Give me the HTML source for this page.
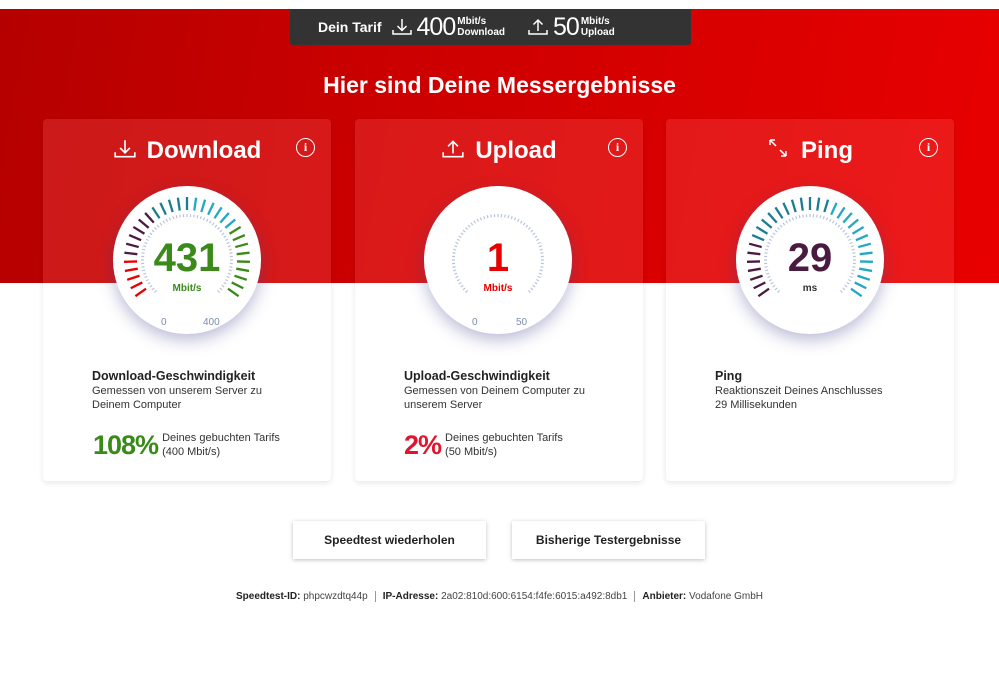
<!DOCTYPE html>
<html><head><meta charset="utf-8"><style>
*{margin:0;padding:0;box-sizing:border-box}
body{width:999px;height:693px;background:#fff;font-family:"Liberation Sans",sans-serif;position:relative;overflow:hidden;color:#333}
.band{position:absolute;left:0;top:9px;width:999px;height:274px;background:linear-gradient(100deg,#b50000 0%,#cc0000 40%,#e80000 100%)}
.tarif{position:absolute;left:290px;top:9px;width:401px;height:36px;background:#333;border-radius:0 0 3px 3px;color:#fff;display:flex;align-items:center}
.tarif b{font-size:14px}
.big{font-size:25px;letter-spacing:-1px}
.sm{font-size:10px;line-height:11px;font-weight:bold}
h1{position:absolute;top:72px;width:999px;text-align:center;color:#fff;font-size:23px;font-weight:bold}
.card{position:absolute;top:119px;width:288px;height:362px;border-radius:4px;box-shadow:0 2px 6px rgba(0,0,0,.10);overflow:hidden}
.card .top{position:absolute;left:0;top:0;width:100%;height:164px;background:rgba(255,90,90,.28)}
.card .bot{position:absolute;left:0;top:164px;width:100%;height:198px;background:#fff}
.title{position:absolute;top:18px;width:100%;text-align:center;color:#fff;font-size:24px;font-weight:bold}
.info{position:absolute;right:16px;top:19px;width:19px;height:19px;border:1.5px solid #fff;border-radius:50%;color:#fff;font:bold 12px "Liberation Serif",serif;text-align:center;line-height:16px}
.g{position:absolute;width:148px;height:148px;border-radius:50%;background:#fff;box-shadow:0 6px 16px rgba(60,60,140,.35);top:186px}
.g svg{position:absolute;left:0;top:0}
.val{position:absolute;width:100%;text-align:center;top:50px;font-size:40px;font-weight:bold}
.unit{position:absolute;width:100%;text-align:center;top:97px;font-size:10px;font-weight:bold}
.sc{position:absolute;top:131px;font-size:10px;color:#7a8cb0}
.txt{position:absolute;top:369px;font-size:11px;line-height:14px;color:#333}
.txt b{font-size:12.5px;color:#222}
.pct{position:absolute;top:431px;display:flex;align-items:center;font-size:11px;line-height:14px}
.pct span{font-size:27px;font-weight:bold;margin-right:4px;letter-spacing:-1px}
.btn{position:absolute;top:521px;width:193px;height:38px;background:#fff;box-shadow:0 1px 4px rgba(0,0,0,.25);font-size:12px;font-weight:bold;text-align:center;line-height:38px;color:#222}
.foot{position:absolute;top:591px;left:0;width:999px;text-align:center;font-size:10px;color:#444}
.foot b{color:#222}
.foot i{font-style:normal;border-left:1px solid #999;margin:0 7px}
</style></head><body>
<div class="band"></div>
<div class="tarif">
<b style="margin-left:28px">Dein Tarif</b>
<svg width="22" height="20" style="margin-left:9px" viewBox="0 0 22 20" fill="none" stroke="#fff" stroke-width="1.5"><path d="M11 2v11M6.5 9l4.5 4.5L15.5 9M2 13v4h18v-4"/></svg>
<span class="big" style="margin-left:4px">400</span><span class="sm" style="margin-left:2px">Mbit/s<br>Download</span>
<svg width="22" height="20" style="margin-left:22px" viewBox="0 0 22 20" fill="none" stroke="#fff" stroke-width="1.5"><path d="M11 14V3M6.5 7.5L11 3l4.5 4.5M2 13v4h18v-4"/></svg>
<span class="big" style="margin-left:4px">50</span><span class="sm" style="margin-left:2px">Mbit/s<br>Upload</span>
</div>
<h1>Hier sind Deine Messergebnisse</h1>

<div class="card" style="left:43px"><div class="top"></div><div class="bot"></div>
<div class="title"><svg width="24" height="22" viewBox="0 0 22 20" fill="none" stroke="#fff" stroke-width="1.5" style="vertical-align:-2px;margin-right:10px"><path d="M11 2v11M6.5 9l4.5 4.5L15.5 9M2 13v4h18v-4"/></svg>Download</div><div class="info">i</div></div>
<div class="card" style="left:355px"><div class="top"></div><div class="bot"></div>
<div class="title"><svg width="24" height="22" viewBox="0 0 22 20" fill="none" stroke="#fff" stroke-width="1.5" style="vertical-align:-2px;margin-right:10px"><path d="M11 14V3M6.5 7.5L11 3l4.5 4.5M2 13v4h18v-4"/></svg>Upload</div><div class="info">i</div></div>
<div class="card" style="left:666px"><div class="top"></div><div class="bot"></div>
<div class="title"><svg width="22" height="22" viewBox="0 0 22 22" fill="none" stroke="#fff" stroke-width="1.5" style="vertical-align:-1px;margin-right:12px"><path d="M3 3l6 6M3 3v5M3 3h5M19 19l-6-6M19 19v-5M19 19h-5"/></svg>Ping</div><div class="info">i</div></div>

<div class="g" style="left:113px" id="g1"><div class="val" style="color:#3a8a1a">431</div><div class="unit" style="color:#3a8a1a">Mbit/s</div><div class="sc" style="left:48px">0</div><div class="sc" style="left:90px">400</div></div>
<div class="g" style="left:424px" id="g2"><div class="val" style="color:#e60000">1</div><div class="unit" style="color:#e60000">Mbit/s</div><div class="sc" style="left:48px">0</div><div class="sc" style="left:92px">50</div></div>
<div class="g" style="left:736px" id="g3"><div class="val" style="color:#4a1b40">29</div><div class="unit" style="color:#333">ms</div></div>

<div class="txt" style="left:92px"><b>Download-Geschwindigkeit</b><br>Gemessen von unserem Server zu<br>Deinem Computer</div>
<div class="txt" style="left:404px"><b>Upload-Geschwindigkeit</b><br>Gemessen von Deinem Computer zu<br>unserem Server</div>
<div class="txt" style="left:715px"><b>Ping</b><br>Reaktionszeit Deines Anschlusses<br>29 Millisekunden</div>
<div class="pct" style="left:93px"><span style="color:#3a8a1a">108%</span><div>Deines gebuchten Tarifs<br>(400 Mbit/s)</div></div>
<div class="pct" style="left:404px"><span style="color:#e2152e">2%</span><div>Deines gebuchten Tarifs<br>(50 Mbit/s)</div></div>

<div class="btn" style="left:293px">Speedtest wiederholen</div>
<div class="btn" style="left:512px">Bisherige Testergebnisse</div>
<div class="foot"><b>Speedtest-ID:</b> phpcwzdtq44p<i></i><b>IP-Adresse:</b> 2a02:810d:600:6154:f4fe:6015:a492:8db1<i></i><b>Anbieter:</b> Vodafone GmbH</div>

<script>
function gauge(id,cols){
 var n=cols.length,s='<svg width="148" height="148" viewBox="0 0 148 148">';
 for(var i=0;i<n;i++){var a=(215-250*i/(n-1))*Math.PI/180,c=Math.cos(a),d=Math.sin(a);
  if(cols[i]) s+='<line x1="'+(74+50*c)+'" y1="'+(74-50*d)+'" x2="'+(74+63*c)+'" y2="'+(74-63*d)+'" stroke="'+cols[i]+'" stroke-width="2.3"/>';}
 for(var i=0;i<=60;i++){var a=(225-270*i/60)*Math.PI/180,c=Math.cos(a),d=Math.sin(a);
  s+='<line x1="'+(74+43*c)+'" y1="'+(74-43*d)+'" x2="'+(74+46*c)+'" y2="'+(74-46*d)+'" stroke="#b8c4dc" stroke-width="1.2"/>';}
 document.getElementById(id).insertAdjacentHTML('afterbegin',s+'</svg>');}
var R='#e60000',P='#4a1b40',T='#1b7d93',C='#22a8c4',G='#3a8a1a',a=[],b=[],p=[];
for(var i=0;i<31;i++){a.push(i<5?R:i<11?P:i<16?T:i<22?C:G);b.push(null);p.push(i<7?P:i<18?T:C);}
gauge('g1',a);gauge('g2',b);gauge('g3',p);
</script>
</body></html>
